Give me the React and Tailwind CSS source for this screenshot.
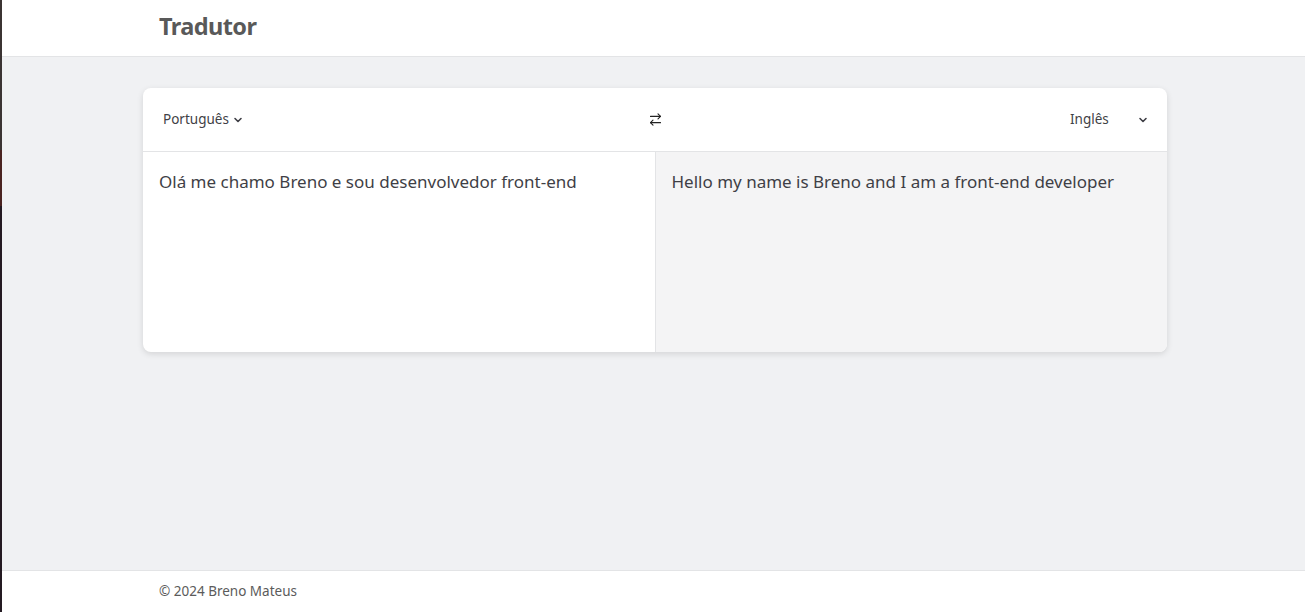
import React from "react";
import { ArrowRightLeft, ChevronDown } from "lucide-react";

export default function App() {
  return (
    <div className="flex min-h-[612px] w-full" style={{ fontFamily: '"Noto Sans", "Open Sans", sans-serif' }}>
      <div className="w-[2px] flex flex-col shrink-0">
        <div className="h-[150px] bg-[#3b3433]" />
        <div className="h-[56px] bg-[#4a2320]" />
        <div className="flex-1 bg-[#241a22]" />
      </div>
      <div className="flex-1 flex flex-col bg-[#f0f1f3]">
        <header className="h-[57px] bg-white border-b border-[#e3e4e6] pl-[3px]">
          <div className="w-[1024px] mx-auto px-4 h-full flex items-center">
            <h1 className="text-[23.5px] font-bold text-[#595959] tracking-tight -mt-[2px]">Tradutor</h1>
          </div>
        </header>
        <main className="flex-1 pt-[31px] pl-[3px]">
          <div className="w-[1024px] mx-auto bg-white rounded-lg shadow-[0_2px_6px_rgba(0,0,0,0.12)] overflow-hidden">
            <div className="h-[64px] grid grid-cols-3 items-center border-b border-[#e3e4e6] px-5 text-[#3f3f46]">
              <div className="flex items-center gap-[3px] text-[13.5px] justify-self-start">
                <span>Português</span>
                <ChevronDown size={12} strokeWidth={3.2} className="mt-[1px]" />
              </div>
              <div className="flex justify-center">
                <ArrowRightLeft size={15} strokeWidth={1.8} className="text-[#222]" />
              </div>
              <div className="flex items-center w-[79px] justify-between text-[13.5px] justify-self-end mr-[-2px]">
                <span>Inglês</span>
                <ChevronDown size={12} strokeWidth={3.2} className="mt-[1px]" />
              </div>
            </div>
            <div className="flex h-[200px]">
              <div className="flex-1 px-4 pt-[17px] text-[17px] text-[#3f3f46]">
                Olá me chamo Breno e sou desenvolvedor front-end
              </div>
              <div className="flex-1 px-4 pt-[17px] text-[17px] text-[#3f3f46] bg-[#f4f4f5] border-l border-[#e3e4e6]">
                Hello my name is Breno and I am a front-end developer
              </div>
            </div>
          </div>
        </main>
        <footer className="h-[42px] bg-white border-t border-[#e3e4e6] pl-[3px]">
          <div className="w-[1024px] mx-auto px-4 h-full flex items-center">
            <span className="text-[13.5px] text-[#5b5b5b]">© 2024 Breno Mateus</span>
          </div>
        </footer>
      </div>
    </div>
  );
}
